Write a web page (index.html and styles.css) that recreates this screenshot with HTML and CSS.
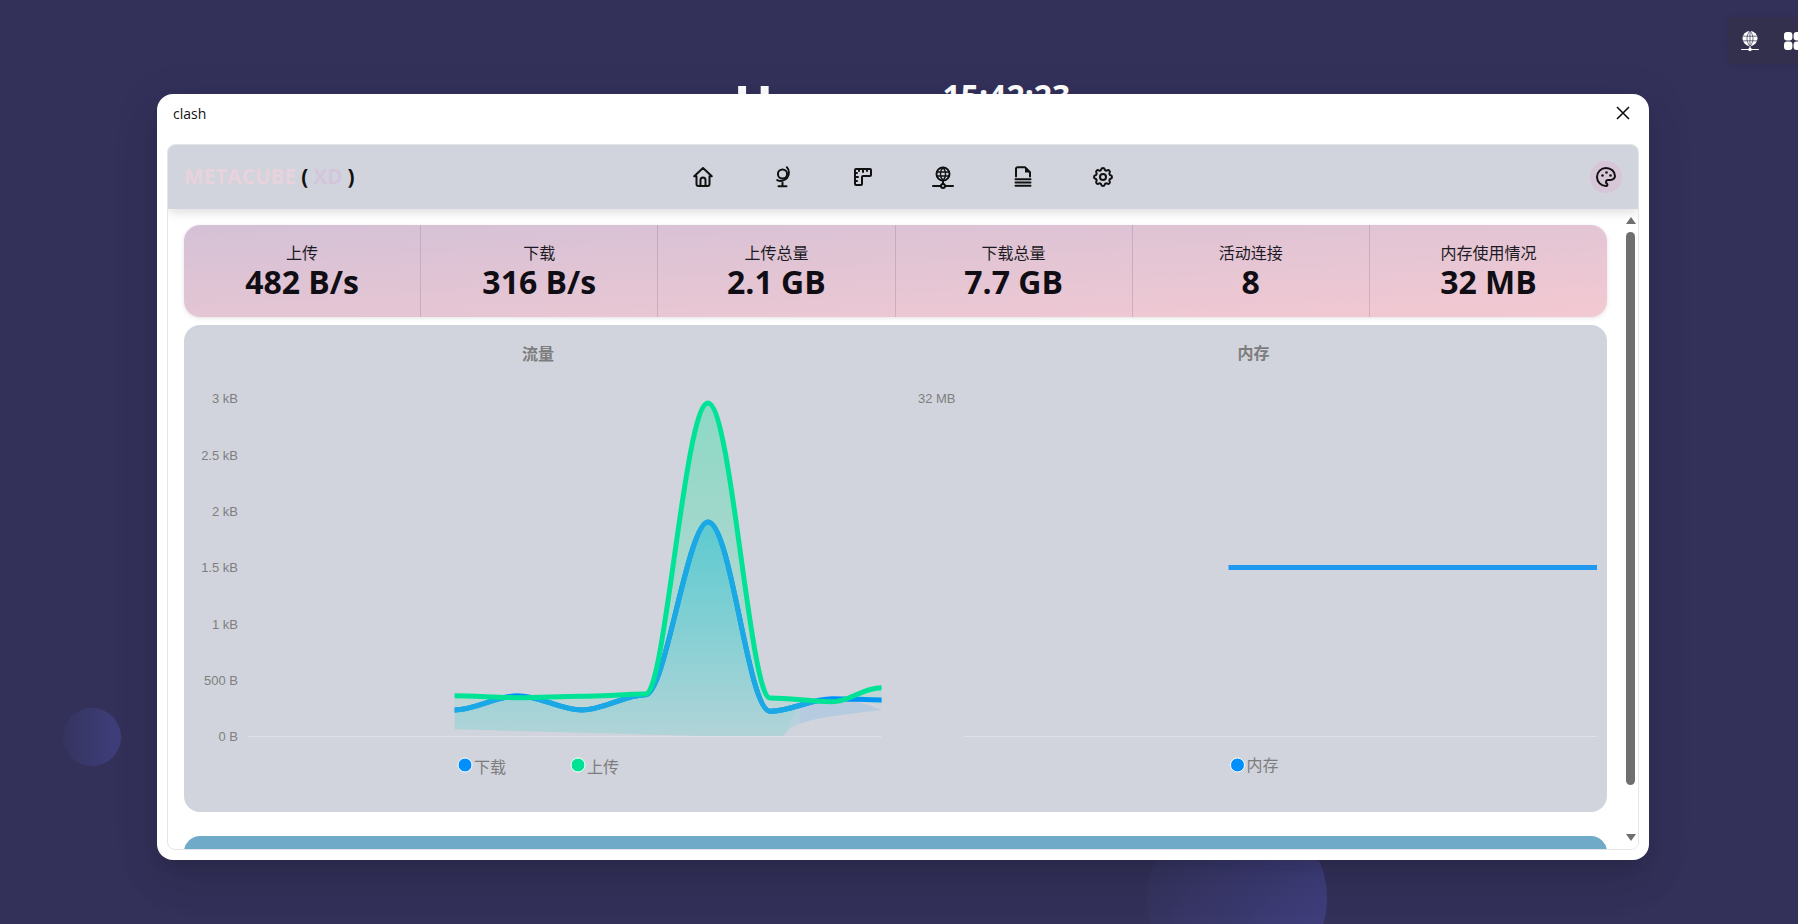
FILE: index.html
```html
<!DOCTYPE html>
<html lang="zh-CN">
<head>
    <meta charset="UTF-8">
    <meta name="viewport" content="width=device-width, initial-scale=1.0">
    <title>clash</title>
    <link rel="stylesheet" href="styles.css">
</head>
<body>
<div class="desktop">
    <!-- desktop behind the dialog -->
    <div class="bubble bubble-small"></div>
    <div class="bubble bubble-big"></div>

    <div class="clock">
        <span class="clock-mark">H</span>
        <span class="clock-time">15:42:23</span>
    </div>

    <div class="tray">
        <svg class="tray-icon" viewBox="0 0 24 24">
            <circle class="tray-globe" cx="12" cy="9.5" r="7.5"/>
            <path class="tray-grid" d="M4.8 7.2h14.4M4.8 11.8h14.4M12 2v15M12 2c-4 4-4 11 0 15M12 2c4 4 4 11 0 15"/>
            <path class="tray-base" d="M12 17v3M3.2 20.5h17.6"/>
            <circle class="tray-node" cx="12" cy="20.5" r="1.8"/>
        </svg>
        <svg class="tray-icon" viewBox="0 0 24 24">
            <rect class="tray-node" x="3" y="3" width="8.4" height="8.4" rx="3"/>
            <rect class="tray-node" x="12.6" y="3" width="8.4" height="8.4" rx="3"/>
            <rect class="tray-node" x="3" y="12.6" width="8.4" height="8.4" rx="3"/>
            <rect class="tray-node" x="12.6" y="12.6" width="8.4" height="8.4" rx="3"/>
        </svg>
    </div>

    <div class="dialog">
        <div class="dialog-title">
            <span>clash</span>
            <svg class="close-icon" viewBox="0 0 14 14"><path d="M1 1l12 12M13 1L1 13"/></svg>
        </div>

        <div class="panel">
            <header class="topbar">
                <div class="logo">
                    <span class="logo-meta">METACUBE</span>
                    <span class="logo-paren">(</span>
                    <span class="logo-xd">XD</span>
                    <span class="logo-paren">)</span>
                </div>
                <nav class="nav">
                    <svg class="icon" viewBox="0 0 24 24"><path d="M12 3L3.2 11.2H5.5V19a2 2 0 0 0 2 2h9a2 2 0 0 0 2-2V11.2h2.3z"/><path d="M9.5 21v-6a2.5 2.5 0 0 1 5 0v6"/></svg>
                    <svg class="icon" viewBox="0 0 24 24"><circle cx="11.5" cy="9" r="4.6"/><path d="M15.8 2.2a8.2 8.2 0 0 1-9.6 12.9"/><path d="M11.5 17.5V21M7.5 21.2h8"/></svg>
                    <svg class="icon" viewBox="0 0 24 24"><path d="M5 4h14a1 1 0 0 1 1 1v5a1 1 0 0 1-1 1h-7a1 1 0 0 0-1 1v7a1 1 0 0 1-1 1H5a1 1 0 0 1-1-1V5a1 1 0 0 1 1-1"/><path d="M4 8h2M4 12h3M4 16h2M8 4v2M12 4v3M16 4v2"/></svg>
                    <svg class="icon" viewBox="0 0 24 24"><circle cx="12" cy="9" r="6.5"/><path class="icon-thin" d="M5.8 7h12.4M5.8 11h12.4M12 2.5c-3.4 3.5-3.4 9.5 0 13M12 2.5c3.4 3.5 3.4 9.5 0 13"/><path d="M12 15.5v3M2 21h7.5M14.5 21H22"/><circle cx="12" cy="21" r="2"/></svg>
                    <svg class="icon" viewBox="0 0 24 24"><path d="M5 11.5V4a1.7 1.7 0 0 1 1.7-1.7H14l5 5v4.2"/><path class="icon-fill" d="M14 2.5v5h5z"/><path d="M4.5 14.3h15M4.5 17.5h15M4.5 20.7h15"/></svg>
                    <svg class="icon" viewBox="0 0 24 24"><path d="M10.325 4.317c.426-1.756 2.924-1.756 3.35 0a1.724 1.724 0 0 0 2.573 1.066c1.543-.94 3.31.826 2.37 2.37a1.724 1.724 0 0 0 1.065 2.572c1.756.426 1.756 2.924 0 3.35a1.724 1.724 0 0 0-1.066 2.573c.94 1.543-.826 3.31-2.37 2.37a1.724 1.724 0 0 0-2.572 1.065c-.426 1.756-2.924 1.756-3.35 0a1.724 1.724 0 0 0-2.573-1.066c-1.543.94-3.31-.826-2.37-2.37a1.724 1.724 0 0 0-1.065-2.572c-1.756-.426-1.756-2.924 0-3.35a1.724 1.724 0 0 0 1.066-2.573c-.94-1.543.826-3.31 2.37-2.37 1 .608 2.296.07 2.572-1.065z"/><circle cx="12" cy="12" r="3"/></svg>
                </nav>
                <div class="theme-btn">
                    <svg class="icon" viewBox="0 0 24 24"><path d="M12 21a9 9 0 0 1 0-18c4.97 0 9 3.582 9 8 0 1.06-.474 2.078-1.318 2.828-.844.75-1.989 1.172-3.182 1.172h-2.5a2 2 0 0 0-1 3.75 1.3 1.3 0 0 1-1 2.25"/><circle class="icon-fill" cx="8.5" cy="10.5" r="1.3"/><circle class="icon-fill" cx="12.5" cy="7.5" r="1.3"/><circle class="icon-fill" cx="16.5" cy="10.5" r="1.3"/></svg>
                </div>
            </header>

            <div class="panel-body">
                <main class="content">
                    <section class="stats">
                        <div class="stat"><div class="stat-title">上传</div><div class="stat-value">482 B/s</div></div>
                        <div class="stat"><div class="stat-title">下载</div><div class="stat-value">316 B/s</div></div>
                        <div class="stat"><div class="stat-title">上传总量</div><div class="stat-value">2.1 GB</div></div>
                        <div class="stat"><div class="stat-title">下载总量</div><div class="stat-value">7.7 GB</div></div>
                        <div class="stat"><div class="stat-title">活动连接</div><div class="stat-value">8</div></div>
                        <div class="stat"><div class="stat-title">内存使用情况</div><div class="stat-value">32 MB</div></div>
                    </section>

                    <section class="charts">
                        <!-- traffic chart, viewBox uses page coordinates -->
                        <svg class="chart" viewBox="184 325 711.5 487">
                            <defs>
                                <linearGradient id="fillBlue" gradientUnits="userSpaceOnUse" x1="0" y1="522" x2="0" y2="736">
                                    <stop offset="0" stop-color="#00aaeb" stop-opacity="0.42"/>
                                    <stop offset="1" stop-color="#00c4e0" stop-opacity="0.1"/>
                                </linearGradient>
                                <linearGradient id="fillGreen" gradientUnits="userSpaceOnUse" x1="0" y1="403" x2="0" y2="736">
                                    <stop offset="0" stop-color="#00e396" stop-opacity="0.33"/>
                                    <stop offset="1" stop-color="#00e396" stop-opacity="0.06"/>
                                </linearGradient>
                                <clipPath id="greenArea">
                                    <path d="M454.6 695.7C475 695.7 497 697.7 517.5 697.7C540 697.7 560 696.3 581.7 696.3C603 696.3 625 694 646 694C665 694 685 403 708 403C731 403 750 698 770 698C791 698 811 701.7 832 701.7L832 720L784 736L700 736L454.6 729.3Z"/>
                                </clipPath>
                                <clipPath id="leftOfTail"><rect x="440" y="400" width="360" height="340"/></clipPath>
                                <clipPath id="tail"><rect x="800" y="400" width="90" height="340"/></clipPath>
                            </defs>

                            <text class="chart-title" x="538" y="360">流量</text>
                            <text class="axis-label" x="238" y="403">3 kB</text>
                            <text class="axis-label" x="238" y="460">2.5 kB</text>
                            <text class="axis-label" x="238" y="516">2 kB</text>
                            <text class="axis-label" x="238" y="572">1.5 kB</text>
                            <text class="axis-label" x="238" y="629">1 kB</text>
                            <text class="axis-label" x="238" y="685">500 B</text>
                            <text class="axis-label" x="238" y="741">0 B</text>
                            <path class="axis-line" d="M248 736.5H881.6"/>

                            <path fill="url(#fillBlue)" clip-path="url(#leftOfTail)" d="M454.6 710C475 710 497 695.7 517.5 695.7C540 695.7 560 710 581.7 710C603 710 625 694.7 646 694.7C665 694.7 688 522 708 522C731 522 748 711.3 770 711.3C791 711.3 811 698.7 832 698.7C850 698.7 865 703 881.6 710C830 716 790 720 784 736L700 736L454.6 729.3Z"/>
                            <path class="area-tail" clip-path="url(#tail)" d="M770 711.3C791 711.3 811 698.7 832 698.7C850 698.7 865 703 881.6 710C830 716 790 720 784 736Z"/>
                            <path class="line line-blue" d="M454.6 710C475 710 497 695.7 517.5 695.7C540 695.7 560 710 581.7 710C603 710 625 694.7 646 694.7C665 694.7 688 522 708 522C731 522 748 711.3 770 711.3C791 711.3 811 698.7 832 698.7C850 698.7 865 700 881.6 700"/>
                            <path fill="url(#fillGreen)" d="M454.6 695.7C475 695.7 497 697.7 517.5 697.7C540 697.7 560 696.3 581.7 696.3C603 696.3 625 694 646 694C665 694 685 403 708 403C731 403 750 698 770 698C780 698 792 699 800 700L784 736L700 736L454.6 729.3Z"/>
                            <path fill="url(#fillGreen)" d="M850 698C860 690 870 687.7 881.6 687.7V706Z"/>
                            <path class="line line-blue-soft" clip-path="url(#greenArea)" d="M454.6 710C475 710 497 695.7 517.5 695.7C540 695.7 560 710 581.7 710C603 710 625 694.7 646 694.7C665 694.7 688 522 708 522C731 522 748 711.3 770 711.3C791 711.3 811 698.7 832 698.7"/>
                            <path class="line line-green" d="M454.6 695.7C475 695.7 497 697.7 517.5 697.7C540 697.7 560 696.3 581.7 696.3C603 696.3 625 694 646 694C665 694 685 403 708 403C731 403 750 698 770 698C791 698 811 701.7 832 701.7C850 701.7 862 687.7 881.6 687.7"/>

                            <circle class="dot dot-blue" cx="465" cy="765" r="7"/>
                            <text class="legend" x="474" y="773">下载</text>
                            <circle class="dot dot-green" cx="578" cy="765" r="7"/>
                            <text class="legend" x="587" y="773">上传</text>
                        </svg>

                        <!-- memory chart -->
                        <svg class="chart" viewBox="895.5 325 711.5 487">
                            <text class="chart-title" x="1253" y="359">内存</text>
                            <text class="axis-label" x="955" y="403">32 MB</text>
                            <path class="axis-line" d="M963 736.5H1596.5"/>
                            <path class="line line-mem" d="M1228 567.5H1596.5"/>
                            <circle class="dot dot-blue" cx="1237" cy="765" r="7"/>
                            <text class="legend" x="1246" y="771">内存</text>
                        </svg>
                    </section>

                    <section class="next-card"></section>
                </main>

                <div class="scrollbar">
                    <span class="arrow arrow-up"></span>
                    <span class="thumb"></span>
                    <span class="arrow arrow-down"></span>
                </div>
            </div>
        </div>
    </div>
</div>
</body>
</html>
```

FILE: styles.css
```css
html, body {
    margin: 0;
    height: 100%;
}

body {
    background: #33315a;
    color: #111;
    font-family: 'Open Sans', 'Noto Sans CJK SC', sans-serif;
}

.desktop {
    position: relative;
    overflow: hidden;
    height: 100vh;
}

.bubble {
    position: absolute;
    border-radius: 50%;
    background: linear-gradient(90deg, #35345f 0%, #3f3e7c 100%);
}

.bubble-small {
    left: 63px;
    top: 708px;
    width: 58px;
    height: 58px;
}

.bubble-big {
    left: 1147px;
    top: 808px;
    width: 180px;
    height: 180px;
}

.clock {
    display: flex;
    justify-content: center;
    align-items: flex-start;
    gap: 169px;
    height: 94px;
    padding-left: 6px;
    overflow: hidden;
    color: #fff;
    font-weight: 700;
}

.clock-mark {
    margin-top: 72px;
    font-size: 52px;
    line-height: 1.2;
}

.clock-time {
    margin-top: 77px;
    font-size: 32px;
    line-height: 1.2;
}

.tray {
    position: absolute;
    left: 1727px;
    top: 17px;
    display: flex;
    align-items: center;
    gap: 19px;
    height: 47px;
    width: 120px;
    padding-left: 11px;
    box-sizing: border-box;
    border-radius: 8px;
    background: #32304c;
    box-shadow: 0 2px 10px rgba(0, 0, 0, 0.08);
}

.tray-icon {
    width: 24px;
    height: 24px;
    flex: none;
}

.tray-globe, .tray-node {
    fill: #fff;
}

.tray-grid {
    fill: none;
    stroke: #32304c;
    stroke-width: 0.7;
}

.tray-base {
    fill: none;
    stroke: #fff;
    stroke-width: 1.2;
}

.dialog {
    position: absolute;
    left: 157px;
    top: 94px;
    width: 1492px;
    height: 766px;
    display: flex;
    flex-direction: column;
    box-sizing: border-box;
    padding: 0 10px 10px;
    border-radius: 16px;
    background: #fff;
    box-shadow: 0 11px 15px -7px rgba(0, 0, 0, 0.1), 0 24px 38px 3px rgba(0, 0, 0, 0.07), 0 9px 46px 8px rgba(0, 0, 0, 0.06);
}

.dialog-title {
    display: flex;
    justify-content: space-between;
    align-items: center;
    height: 50px;
    flex: none;
    box-sizing: border-box;
    padding: 0 9px 12px 6px;
    font-size: 14px;
}

.close-icon {
    width: 14px;
    height: 14px;
    fill: none;
    stroke: #111;
    stroke-width: 1.6;
}

.panel {
    flex: 1;
    min-height: 0;
    display: flex;
    flex-direction: column;
    overflow: hidden;
    border: 1px solid #e5e5e8;
    border-radius: 8px;
}

.topbar {
    position: relative;
    z-index: 1;
    flex: none;
    display: flex;
    align-items: center;
    justify-content: space-between;
    height: 64px;
    padding: 0 16px;
    background: #d1d4dc;
    box-shadow: 0 4px 10px rgba(0, 0, 0, 0.12);
}

.logo {
    width: 200px;
    display: flex;
    gap: 5px;
    margin-top: -2px;
    font-size: 20.8px;
    font-weight: 700;
    line-height: 1;
}

.logo-meta {
    color: #e8d2dc;
}

.logo-xd {
    color: #d4c4dc;
}

.logo-paren {
    color: #111;
}

.nav {
    display: flex;
    gap: 56px;
}

.icon {
    display: block;
    width: 24px;
    height: 24px;
    fill: none;
    stroke: #111;
    stroke-width: 2;
    stroke-linecap: round;
    stroke-linejoin: round;
}

.icon-thin {
    stroke-width: 1.4;
}

.icon-fill {
    fill: #111;
    stroke: none;
}

.theme-btn {
    width: 200px;
    display: flex;
    justify-content: flex-end;
}

.theme-btn .icon {
    padding: 4px;
    border-radius: 50%;
    background: #d7c5d8;
}

.panel-body {
    flex: 1;
    min-height: 0;
    display: flex;
}

.content {
    flex: 1;
    min-width: 0;
    overflow: hidden;
    padding: 16px 16px 0;
}

.stats {
    display: grid;
    grid-template-columns: repeat(6, 1fr);
    height: 92px;
    border-radius: 16px;
    background: linear-gradient(176.5deg, #d4c1d6 0%, #f3c9d2 100%);
    box-shadow: 0 1px 4px rgba(0, 0, 0, 0.12);
}

.stat {
    display: flex;
    flex-direction: column;
    align-items: center;
    justify-content: center;
    border-right: 1px solid rgba(120, 100, 130, 0.25);
}

.stat:last-child {
    border-right: none;
}

.stat-title {
    font-size: 16px;
    line-height: 20px;
    color: #1c1a24;
}

.stat-value {
    margin-top: 1px;
    font-size: 32px;
    font-weight: 700;
    line-height: 36px;
    color: #100e14;
}

.charts {
    display: grid;
    grid-template-columns: 1fr 1fr;
    height: 487px;
    margin-top: 8px;
    border-radius: 16px;
    background: #d1d4dc;
}

.chart {
    display: block;
    width: 100%;
    height: 487px;
}

.chart-title {
    font-size: 16px;
    font-weight: 700;
    fill: #7d7d7d;
    text-anchor: middle;
}

.axis-label {
    font-family: 'Liberation Sans', 'Noto Sans CJK SC', sans-serif;
    font-size: 13px;
    fill: #7f7f7f;
    text-anchor: end;
}

.axis-line {
    stroke: #dfe1e6;
    stroke-width: 1;
}

.area-tail {
    fill: #008ffb;
    fill-opacity: 0.13;
}

.line {
    fill: none;
    stroke-width: 5;
}

.line-blue {
    stroke: #008ffb;
}

.line-blue-soft {
    stroke: #1ba9e6;
}

.line-green {
    stroke: #00e396;
}

.line-mem {
    stroke: #1f98f0;
}

.dot {
    stroke: #fff;
    stroke-width: 1;
}

.dot-blue {
    fill: #008ffb;
}

.dot-green {
    fill: #00e396;
}

.legend {
    font-family: 'Noto Sans CJK SC', sans-serif;
    font-size: 16px;
    fill: #7d7d7d;
}

.next-card {
    height: 40px;
    margin-top: 24px;
    border-radius: 16px;
    background: #70aac9;
}

.scrollbar {
    flex: none;
    width: 15px;
    display: flex;
    flex-direction: column;
    align-items: center;
    padding: 8px 0;
    box-sizing: border-box;
    background: #fff;
}

.thumb {
    flex: none;
    width: 9px;
    height: 553px;
    margin: 8px 0 49px;
    border-radius: 5px;
    background: #6f6f6f;
}

.arrow {
    flex: none;
    width: 0;
    height: 0;
    border-left: 5px solid transparent;
    border-right: 5px solid transparent;
}

.arrow-up {
    border-bottom: 7px solid #6f6f6f;
}

.arrow-down {
    border-top: 7px solid #6f6f6f;
}
```
